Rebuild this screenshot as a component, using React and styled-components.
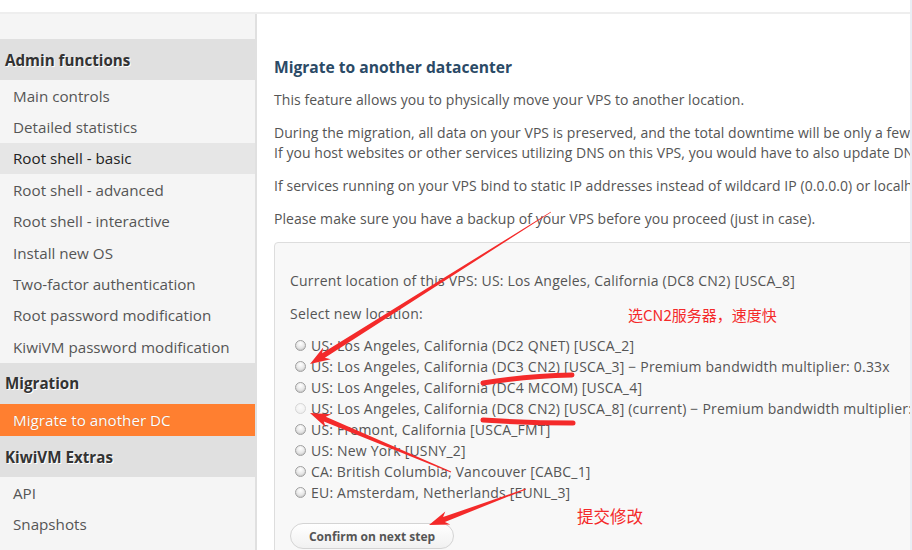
import React from "react";
import styled, { createGlobalStyle } from "styled-components";

const GlobalStyle = createGlobalStyle`
  html, body { margin: 0; padding: 0; background: #fff; }
  body { font-family: "Open Sans", "Noto Sans", Arial, sans-serif; }
`;

const Page = styled.div`
  position: relative;
  width: 912px;
  height: 550px;
  overflow: hidden;
  display: flex;
  background: #fff;
`;

const Frame = styled.div`
  flex: 1;
  display: flex;
  flex-direction: column;
  min-width: 0;
`;

const ScrollStrip = styled.div`
  width: 2px;
  background: #e9eef4;
`;

const TopBar = styled.div`
  height: 12px;
  border-bottom: 2px solid #eeeeee;
  flex-shrink: 0;
`;

const Body = styled.div`
  flex: 1;
  display: flex;
  min-height: 0;
`;

const Sidebar = styled.nav`
  width: 255px;
  flex-shrink: 0;
  background: #f5f5f5;
  border-right: 2px solid #e0e0e0;
  padding-top: 25px;
  display: flex;
  flex-direction: column;
`;

const SectionHeader = styled.div`
  height: 41px;
  display: flex;
  align-items: center;
  padding-left: 5px;
  margin-right: -2px;
  background: #e0e0e0;
  color: #333;
  font-size: 15.2px;
  font-weight: 700;
  text-shadow: 1px 1px 0 #fff;
`;

const NavItem = styled.div`
  height: ${(p) => (p.$active ? "32.5px" : "31.4px")};
  display: flex;
  align-items: center;
  padding-left: 13px;
  font-size: 15.2px;
  color: ${(p) => (p.$active ? "#fff" : p.$hover ? "#222" : "#555")};
  background: ${(p) => (p.$active ? "#ff7f30" : p.$hover ? "#e6e6e6" : "transparent")};
  text-shadow: ${(p) => (p.$active ? "0 0 1px rgba(0,0,0,0.25)" : "none")};
`;

const Main = styled.main`
  flex: 1;
  min-width: 0;
  overflow: hidden;
  white-space: nowrap;
  padding-left: 17px;
  color: #555;
  font-size: 14px;
`;

const Title = styled.h2`
  margin: 43px 0 0;
  font-size: 15.6px;
  line-height: 20px;
  font-weight: 700;
  color: #2b4a66;
`;

const Para = styled.p`
  margin: 13px 0 0;
  line-height: 20px;
  letter-spacing: 0.05px;
`;

const Box = styled.div`
  margin-top: 13px;
  width: 680px;
  border: 1px solid #dddddd;
  border-radius: 4px;
  background: #f8f8f8;
  padding: 28px 0 0 15px;
  height: 400px;
  letter-spacing: 0.2px;
`;

const BoxLine = styled.div`
  line-height: 20px;
  margin-bottom: 13px;
`;

const RadioList = styled.div`
  display: flex;
  flex-direction: column;
  margin-top: -2.5px;
`;

const RadioRow = styled.label`
  height: 21.1px;
  display: flex;
  align-items: center;
  padding-left: 5px;
`;

const Radio = styled.span`
  width: 11px;
  height: 11px;
  border-radius: 50%;
  flex-shrink: 0;
  margin-right: 5px;
  box-sizing: border-box;
  border: 1px solid ${(p) => (p.$disabled ? "#d6d6d6" : "#a0a0a0")};
  background: ${(p) =>
    p.$disabled
      ? "radial-gradient(circle at 50% 35%, #fbfbfb, #ececec)"
      : "radial-gradient(circle at 50% 30%, #ffffff 0%, #e4e4e4 60%, #cfcfcf 100%)"};
  box-shadow: ${(p) => (p.$disabled ? "none" : "inset 0 -1px 1px rgba(0,0,0,0.08)")};
`;

const ConfirmButton = styled.button`
  margin-top: 20px;
  width: 164px;
  height: 26px;
  border: 1px solid #d4d4d4;
  border-radius: 13px;
  background: linear-gradient(#ffffff, #f1f1f1);
  font-family: "Open Sans", Arial, sans-serif;
  font-size: 12px;
  font-weight: 700;
  letter-spacing: 0;
  color: #555;
  padding: 0;
`;

const Overlay = styled.svg`
  position: absolute;
  left: 0;
  top: 0;
  pointer-events: none;
`;

const Note = styled.div`
  position: absolute;
  left: ${(p) => p.$x}px;
  top: ${(p) => p.$y}px;
  color: #f42a2a;
  font-family: "Noto Sans CJK SC", "Liberation Serif", serif;
  font-size: ${(p) => p.$size}px;
  line-height: 18px;
  white-space: nowrap;
  pointer-events: none;
`;

const sections = [
  {
    title: "Admin functions",
    items: [
      "Main controls",
      "Detailed statistics",
      "Root shell - basic",
      "Root shell - advanced",
      "Root shell - interactive",
      "Install new OS",
      "Two-factor authentication",
      "Root password modification",
      "KiwiVM password modification",
    ],
  },
  { title: "Migration", items: ["Migrate to another DC"] },
  { title: "KiwiVM Extras", items: ["API", "Snapshots"] },
];

const locations = [
  { label: "US: Los Angeles, California (DC2 QNET) [USCA_2]" },
  { label: "US: Los Angeles, California (DC3 CN2) [USCA_3] \u2212 Premium bandwidth multiplier: 0.33x" },
  { label: "US: Los Angeles, California (DC4 MCOM) [USCA_4]" },
  { label: "US: Los Angeles, California (DC8 CN2) [USCA_8] (current) \u2212 Premium bandwidth multiplier: 0.33x", disabled: true },
  { label: "US: Fremont, California [USCA_FMT]" },
  { label: "US: New York [USNY_2]" },
  { label: "CA: British Columbia, Vancouver [CABC_1]" },
  { label: "EU: Amsterdam, Netherlands [EUNL_3]" },
];

function arrowPoints(tx, ty, hx, hy) {
  const dx = hx - tx;
  const dy = hy - ty;
  const len = Math.hypot(dx, dy);
  const ux = dx / len;
  const uy = dy / len;
  const nx = -uy;
  const ny = ux;
  const headLen = 20;
  const bx = hx - ux * headLen;
  const by = hy - uy * headLen;
  const pts = [
    [tx + nx * 0.4, ty + ny * 0.4],
    [bx + ux * 4 + nx * 2.6, by + uy * 4 + ny * 2.6],
    [bx + nx * 7, by + ny * 7],
    [hx, hy],
    [bx - nx * 7, by - ny * 7],
    [bx + ux * 4 - nx * 2.6, by + uy * 4 - ny * 2.6],
    [tx - nx * 0.4, ty - ny * 0.4],
  ];
  return pts.map((p) => p.map((v) => v.toFixed(1)).join(",")).join(" ");
}

const RED = "#f42a2a";

function Annotations() {
  return (
    <Overlay width="912" height="550" viewBox="0 0 912 550">
      <polygon points={arrowPoints(551, 212, 310, 364)} fill={RED} />
      <polygon points={arrowPoints(451, 472, 310, 413)} fill={RED} />
      <polygon points={arrowPoints(526, 489, 429, 525)} fill={RED} />
      <path d="M483 383 Q525 376 572 375" stroke={RED} strokeWidth="5" strokeLinecap="round" fill="none" />
      <path d="M483 420 Q528 423 573 423" stroke={RED} strokeWidth="5" strokeLinecap="round" fill="none" />
    </Overlay>
  );
}

export default function App() {
  return (
    <>
      <GlobalStyle />
      <Page>
        <Frame>
          <TopBar />
          <Body>
            <Sidebar>
              {sections.map((s) => (
                <React.Fragment key={s.title}>
                  <SectionHeader>{s.title}</SectionHeader>
                  {s.items.map((it) => (
                    <NavItem
                      key={it}
                      $active={it === "Migrate to another DC"}
                      $hover={it === "Root shell - basic"}
                    >
                      {it}
                    </NavItem>
                  ))}
                </React.Fragment>
              ))}
            </Sidebar>
            <Main>
              <Title>Migrate to another datacenter</Title>
              <Para>This feature allows you to physically move your VPS to another location.</Para>
              <Para>
                During the migration, all data on your VPS is preserved, and the total downtime will be only a few minutes.
                <br />
                If you host websites or other services utilizing DNS on this VPS, you would have to also update DNS records.
              </Para>
              <Para>
                If services running on your VPS bind to static IP addresses instead of wildcard IP (0.0.0.0) or localhost, you will need to reconfigure them.
              </Para>
              <Para>Please make sure you have a backup of your VPS before you proceed (just in case).</Para>
              <Box>
                <BoxLine>Current location of this VPS: US: Los Angeles, California (DC8 CN2) [USCA_8]</BoxLine>
                <BoxLine>Select new location:</BoxLine>
                <RadioList>
                  {locations.map((l) => (
                    <RadioRow key={l.label}>
                      <Radio $disabled={l.disabled} />
                      {l.label}
                    </RadioRow>
                  ))}
                </RadioList>
                <ConfirmButton>Confirm on next step</ConfirmButton>
              </Box>
            </Main>
          </Body>
        </Frame>
        <ScrollStrip />
        <Annotations />
        <Note $x={628} $y={306} $size={15}>选CN2服务器，速度快</Note>
        <Note $x={577} $y={507} $size={16.5}>提交修改</Note>
      </Page>
    </>
  );
}
